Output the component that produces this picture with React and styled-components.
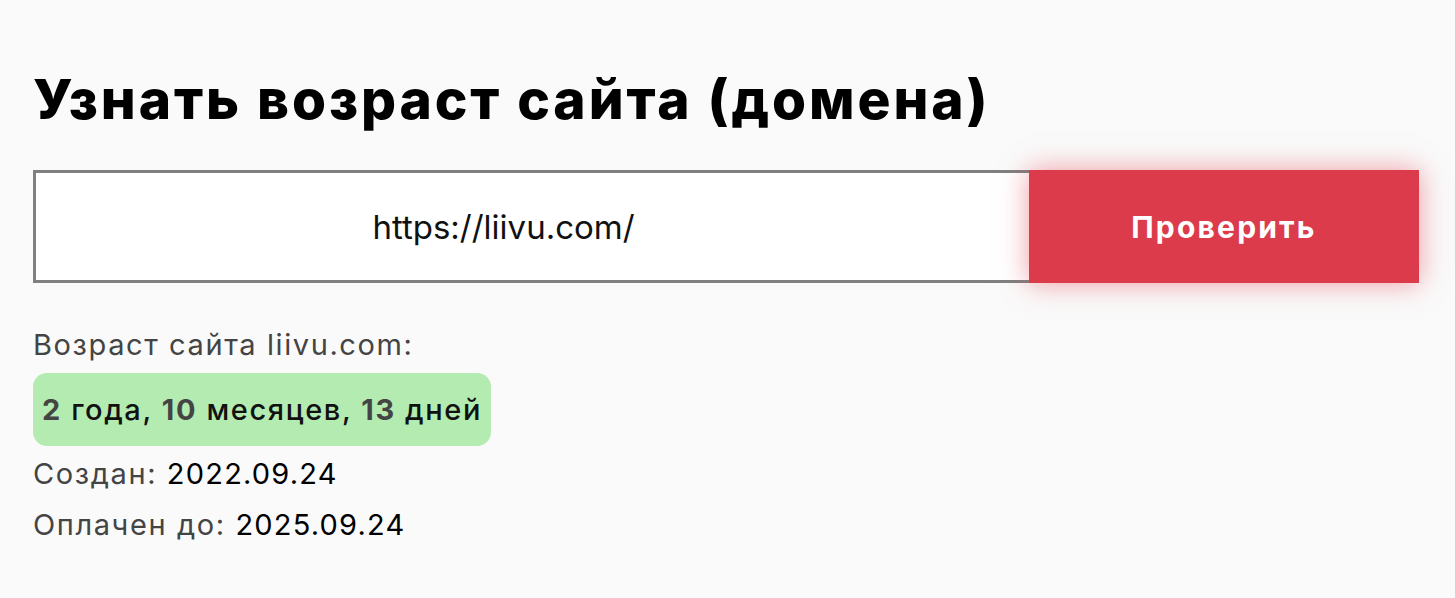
import React from 'react'
import styled, { createGlobalStyle } from 'styled-components'

const GlobalStyle = createGlobalStyle`
body {
  margin: 0;
  background: #fafafa;
  font-family: Inter, "Noto Sans", sans-serif;
}
`

const Page = styled.div`
padding: 60px 36px 0 33px;
`

const Title = styled.h1`
margin: 0 0 32px;
font-size: 55px;
line-height: 78px;
font-weight: 800;
color: #000;
letter-spacing: 2.9px;
`

const Form = styled.form`
display: flex;
width: 1386px;
height: 113px;
`

const Input = styled.input`
flex: 1;
box-sizing: border-box;
height: 100%;
border: 3px solid #808080;
border-right: none;
background: #fff;
padding: 0 58px 0 0;
text-align: center;
font-family: inherit;
font-size: 33px;
color: #111;
outline: none;
`

const Button = styled.button`
width: 390px;
height: 100%;
border: none;
background: #dc3b4b;
color: #fff;
font-family: inherit;
font-size: 30px;
font-weight: 700;
letter-spacing: 2.2px;
cursor: pointer;
box-shadow: 0 0 26px rgba(228, 55, 72, 0.5);
`

const Result = styled.div`
display: flex;
flex-direction: column;
align-items: flex-start;
margin-top: 39px;
gap: 5px;
font-size: 29px;
letter-spacing: 1.6px;
color: #444;
`

const Line = styled.div`
line-height: 46px;
`

const Value = styled.span`
color: #000;
letter-spacing: 1.2px;
`

const Age = styled.div`
background: #b3ebb0;
border-radius: 14px;
padding: 18px 9px;
line-height: 37px;
font-size: 29px;
font-weight: 500;
color: #111;
`

const Num = styled.b`
font-weight: 700;
color: #444;
`

export default function App() {
  return (
    <Page>
      <GlobalStyle />
      <Title>Узнать возраст сайта (домена)</Title>
      <Form onSubmit={e => e.preventDefault()}>
        <Input defaultValue="https://liivu.com/" />
        <Button>Проверить</Button>
      </Form>
      <Result>
        <Line>Возраст сайта liivu.com:</Line>
        <Age><Num>2</Num> года, <Num>10</Num> месяцев, <Num>13</Num> дней</Age>
        <Line>Создан: <Value>2022.09.24</Value></Line>
        <Line>Оплачен до: <Value>2025.09.24</Value></Line>
      </Result>
    </Page>
  )
}
